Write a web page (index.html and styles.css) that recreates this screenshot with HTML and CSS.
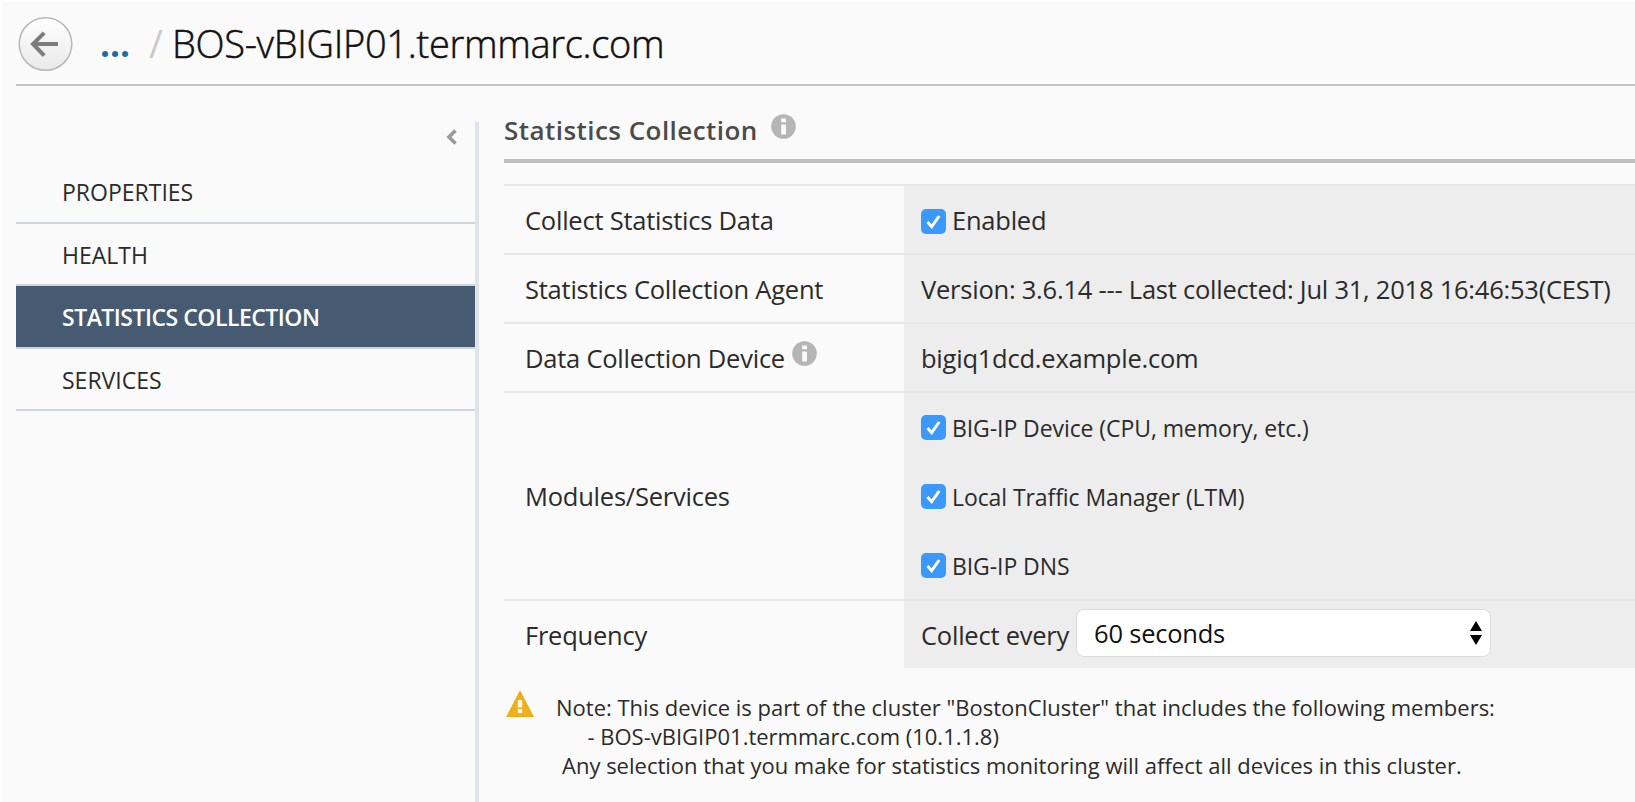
FILE: index.html
```html
<!DOCTYPE html>
<html lang="en">
<head>
<meta charset="utf-8">
<title>BOS-vBIGIP01.termmarc.com</title>
<link rel="stylesheet" href="styles.css">
</head>
<body>
<header class="topbar">
  <button class="back" aria-label="Back">
    <svg viewBox="0 0 56 56" width="56" height="56"><defs><linearGradient id="g" x1="0" y1="0" x2="0" y2="1"><stop offset="0" stop-color="#fff"/><stop offset="1" stop-color="#e9e9e9"/></linearGradient></defs><circle cx="28.500" cy="28" r="26.300" fill="url(#g)" stroke="#b8b8b8" stroke-width="1.500"/><path d="M41 28H16.500M27.200 16.800L16 28l11.200 11.600" fill="none" stroke="#7c7c7c" stroke-width="4"/></svg>
  </button>
  <a class="dots">...</a>
  <span class="slash">/</span>
  <h1 class="title">BOS-vBIGIP01.termmarc.com</h1>
</header>
<div class="body">
  <nav class="side">
    <svg class="collapse" viewBox="0 0 12 16" width="12" height="16"><path d="M9.500 1.500L3 8l6.500 6.500" fill="none" stroke="#9a9a9a" stroke-width="3.600"/></svg>
    <a class="item">PROPERTIES</a>
    <a class="item">HEALTH</a>
    <a class="item on">STATISTICS COLLECTION</a>
    <a class="item">SERVICES</a>
  </nav>
  <main class="main">
    <h2 class="heading">Statistics Collection
      <svg class="info" viewBox="0 0 25 25" width="25" height="25"><circle cx="12.500" cy="12.500" r="12.300" fill="#b5b5b5"/><path d="M10.200 4.500h4.800v3.800h-4.800zM10.200 10.500h4.800v10h-4.800z" fill="#fafafa"/></svg>
    </h2>
    <section class="grid">
      <div class="row"><div class="label">Collect Statistics Data</div><div class="value"><label class="check"><svg class="box low" viewBox="0 0 25 25" width="25" height="25"><rect width="25" height="25" rx="5" fill="#3b99fc"/><path d="M6.500 13l4.200 4.700L18.200 7" fill="none" stroke="#fff" stroke-width="3"/></svg>Enabled</label></div></div>
      <div class="row"><div class="label">Statistics Collection Agent</div><div class="value">Version: 3.6.14 --- Last collected: Jul 31, 2018 16:46:53(CEST)</div></div>
      <div class="row"><div class="label">Data Collection Device<svg class="info" viewBox="0 0 25 25" width="25" height="25"><circle cx="12.500" cy="12.500" r="12.300" fill="#b5b5b5"/><path d="M10.200 4.500h4.800v3.800h-4.800zM10.200 10.500h4.800v10h-4.800z" fill="#fafafa"/></svg></div><div class="value">bigiq1dcd.example.com</div></div>
      <div class="row modules"><div class="label">Modules/Services</div><div class="value">
        <label class="check small"><svg class="box" viewBox="0 0 25 25" width="25" height="25"><rect width="25" height="25" rx="5" fill="#3b99fc"/><path d="M6.500 13l4.200 4.700L18.200 7" fill="none" stroke="#fff" stroke-width="3"/></svg>BIG-IP Device (CPU, memory, etc.)</label>
        <label class="check small"><svg class="box" viewBox="0 0 25 25" width="25" height="25"><rect width="25" height="25" rx="5" fill="#3b99fc"/><path d="M6.500 13l4.200 4.700L18.200 7" fill="none" stroke="#fff" stroke-width="3"/></svg>Local Traffic Manager (LTM)</label>
        <label class="check small"><svg class="box" viewBox="0 0 25 25" width="25" height="25"><rect width="25" height="25" rx="5" fill="#3b99fc"/><path d="M6.500 13l4.200 4.700L18.200 7" fill="none" stroke="#fff" stroke-width="3"/></svg>BIG-IP DNS</label>
      </div></div>
      <div class="row frequency"><div class="label">Frequency</div><div class="value">Collect every<div class="select"><span>60 seconds</span><svg class="arrows" viewBox="0 0 12 24" width="12" height="24"><path d="M6 0l6 10H0zM6 24l6-10H0z" fill="#000"/></svg></div></div></div>
    </section>
    <div class="note">
      <svg class="warn" viewBox="0 0 28 27" width="28" height="27"><path d="M14 0l14 27H0z" fill="#ecb01c"/><path d="M11.800 10h4.400v7.500h-4.400zM11.800 19h4.400v4h-4.400z" fill="#fdf6e0"/></svg>
      <div class="lines"><p>Note: This device is part of the cluster "BostonCluster" that includes the following members:</p><p class="member">- BOS-vBIGIP01.termmarc.com (10.1.1.8)</p><p class="last">Any selection that you make for statistics monitoring will affect all devices in this cluster.</p></div>
    </div>
  </main>
</div>
</body>
</html>
```

FILE: styles.css
```css
* { box-sizing: border-box; margin: 0; padding: 0; }
body { width: 1635px; height: 802px; overflow: hidden; background: #fafafa; border-top: 1px solid #fff; border-left: 2px solid #fff; font-family: "Open Sans", "Noto Sans", sans-serif; font-size: 25.5px; color: #2b2b2b; white-space: nowrap; }
.topbar { display: flex; align-items: center; height: 85px; margin-left: 14px; border-bottom: 2px solid #c4c4c4; }
.back { width: 56px; height: 56px; margin: 2px 0 0 1px; border: 0; background: none; }
.back svg { display: block; }
.dots { width: 33px; margin: 2px 0 0 27px; font-size: 35px; font-weight: 700; line-height: 52px; color: #1470aa; }
.slash { width: 16px; margin-left: 16px; font-size: 38px; line-height: 52px; color: #c9c9cd; }
.title { margin-left: 7px; font-size: 38px; font-weight: 300; letter-spacing: -0.300px; color: #111; line-height: 52px; -webkit-text-stroke: 0.5px #111; }
.body { display: flex; height: 716px; }
.side { width: 459px; margin-left: 14px; padding-top: 43px; }
.collapse { display: block; margin: 0 0 16.300px 430px; }
.item { display: flex; align-items: center; height: 62.500px; padding: 1px 0 0 46px; border-bottom: 2px solid #ced5dd; font-size: 23px; }
.item.on { background: #465b72; color: #fff; font-weight: 600; letter-spacing: -0.500px; }
.main { flex: 1; margin-top: 36px; padding-left: 25px; border-left: 4px solid #dfe3ea; }
.heading { display: flex; align-items: center; height: 41px; padding-bottom: 21px; border-bottom: 4px solid #bfbfbf; font-size: 26px; font-weight: 600; letter-spacing: 0.450px; line-height: 16px; color: #4b4b4b; }
.heading .info { margin: -8px 0 0 13.500px; }
.grid { margin-top: 21px; letter-spacing: -0.230px; }
.row { display: flex; height: 69px; border-top: 2px solid #e6e6e6; }
.row.modules { height: 207.500px; }
.row.frequency > * { padding-top: 2px; }
.label { width: 400px; padding-left: 21px; display: flex; align-items: center; }
.label .info { margin: -8px 0 0 7px; }
.value { flex: 1; padding-left: 17px; display: flex; align-items: center; background: #ededed; }
.modules .value { flex-direction: column; align-items: flex-start; }
.check { display: flex; align-items: center; gap: 6px; height: 69px; flex-shrink: 0; }
.check.small { font-size: 23px; letter-spacing: -0.080px; }
.box.low { margin-top: 3px; }
.select { display: flex; align-items: center; justify-content: space-between; width: 415px; height: 48px; margin: -5px 0 0 7px; padding: 0 8px 0 17px; border: 1px solid #dcdcdc; border-radius: 8px; background: #fff; color: #111; }
.arrows { margin-top: 1px; }
.note { display: flex; margin-top: 22px; font-size: 22px; line-height: 29.300px; }
.warn { margin: 0 0 0 2px; }
.lines { margin: 3px 0 0 22px; }
.member { padding-left: 31.500px; }
.last { padding-left: 6px; }
```
